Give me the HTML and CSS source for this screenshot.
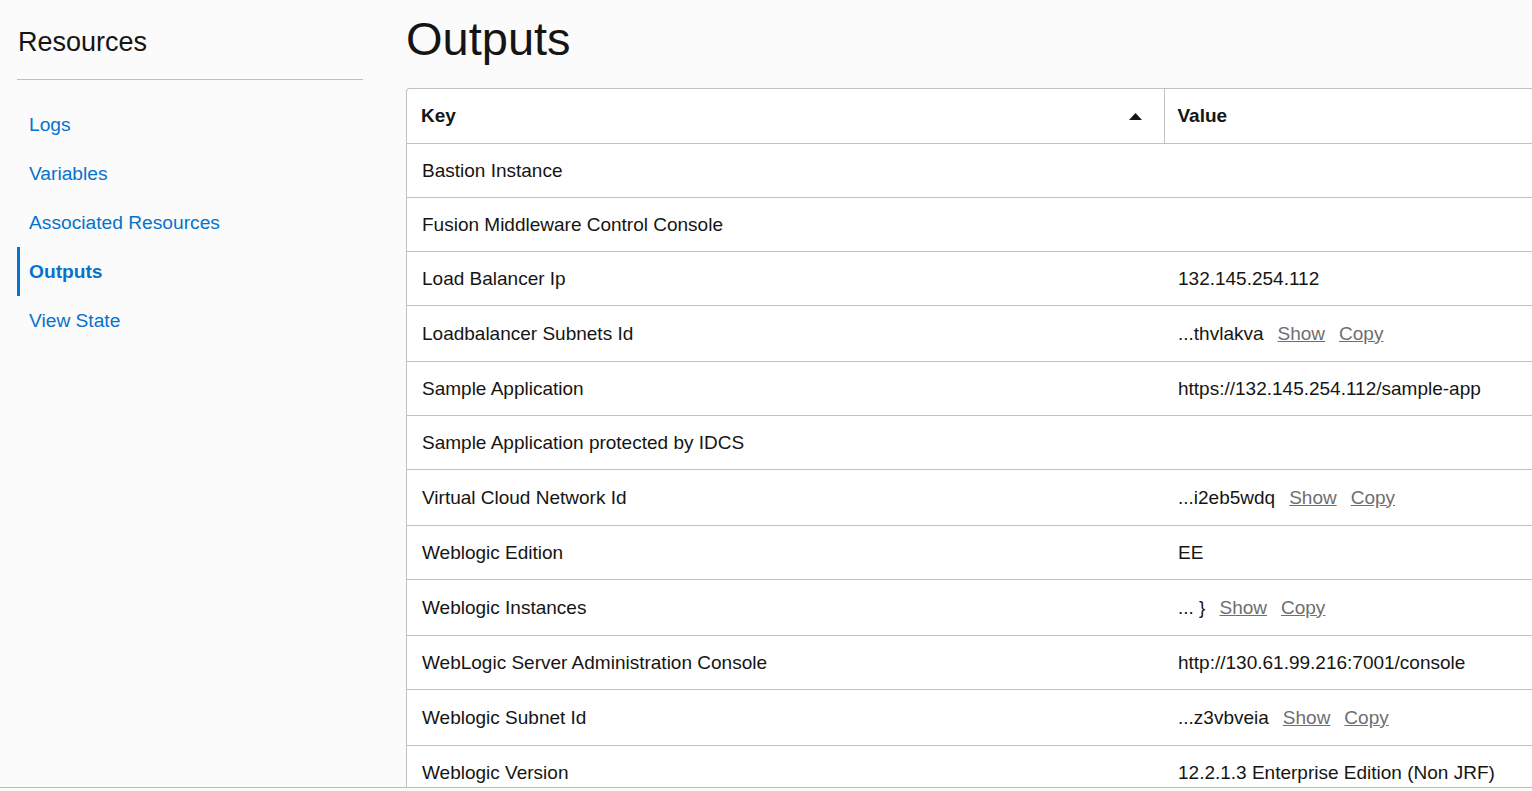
FILE: index.html
```html
<!DOCTYPE html>
<html lang="en">
<head>
<meta charset="utf-8">
<title>Outputs</title>
<link rel="stylesheet" href="styles.css">
</head>
<body>
<div class="page">
  <aside class="sidebar">
    <h2 class="side-title">Resources</h2>
    <nav class="side-nav">
      <a class="nav-item" href="#">Logs</a>
      <a class="nav-item" href="#">Variables</a>
      <a class="nav-item" href="#">Associated Resources</a>
      <a class="nav-item active" href="#">Outputs</a>
      <a class="nav-item" href="#">View State</a>
    </nav>
  </aside>
  <main class="main">
    <h1 class="title">Outputs</h1>
    <div class="table-box">
      <table class="grid">
        <thead>
          <tr>
            <th class="col-key"><div class="th-inner"><span>Key</span><svg class="sort" width="13" height="7" viewBox="0 0 13 7"><polygon points="0,7 6.5,0 13,7" fill="#161513"/></svg></div></th>
            <th class="col-val">Value</th>
          </tr>
        </thead>
        <tbody>
          <tr><td class="k">Bastion Instance</td><td class="v"></td></tr>
          <tr><td class="k">Fusion Middleware Control Console</td><td class="v"></td></tr>
          <tr><td class="k">Load Balancer Ip</td><td class="v">132.145.254.112</td></tr>
          <tr class="tall"><td class="k">Loadbalancer Subnets Id</td><td class="v">...thvlakva<a class="act" href="#">Show</a><a class="act" href="#">Copy</a></td></tr>
          <tr><td class="k">Sample Application</td><td class="v">https://132.145.254.112/sample-app</td></tr>
          <tr><td class="k">Sample Application protected by IDCS</td><td class="v"></td></tr>
          <tr class="tall"><td class="k">Virtual Cloud Network Id</td><td class="v">...i2eb5wdq<a class="act" href="#">Show</a><a class="act" href="#">Copy</a></td></tr>
          <tr><td class="k">Weblogic Edition</td><td class="v">EE</td></tr>
          <tr class="tall"><td class="k">Weblogic Instances</td><td class="v">... }<a class="act" href="#">Show</a><a class="act" href="#">Copy</a></td></tr>
          <tr><td class="k">WebLogic Server Administration Console</td><td class="v">http://130.61.99.216:7001/console</td></tr>
          <tr class="tall"><td class="k">Weblogic Subnet Id</td><td class="v">...z3vbveia<a class="act" href="#">Show</a><a class="act" href="#">Copy</a></td></tr>
          <tr><td class="k">Weblogic Version</td><td class="v">12.2.1.3 Enterprise Edition (Non JRF)</td></tr>
        </tbody>
      </table>
    </div>
  </main>
</div>
</body>
</html>
```

FILE: styles.css
```css
html, body {
  margin: 0;
  padding: 0;
  background: #fbfbfb;
  font-family: "Liberation Sans", Arial, sans-serif;
  color: #161513;
}

.page {
  display: flex;
  height: 787px;
  overflow: hidden;
  border-bottom: 1px solid #b9bcc4;
}

.sidebar {
  flex: none;
  width: 346px;
  margin-left: 17px;
}

.side-title {
  margin: 26px 0 0 1px;
  font-size: 27px;
  line-height: 32px;
  font-weight: normal;
  color: #161513;
}

.side-nav {
  margin-top: 21px;
  border-top: 1px solid #bcc0c7;
  padding-top: 20px;
  display: flex;
  flex-direction: column;
}

.nav-item {
  display: block;
  height: 49px;
  line-height: 49px;
  padding-left: 9px;
  border-left: 3px solid transparent;
  font-size: 19.2px;
  color: #0572ce;
  text-decoration: none;
}

.nav-item.active {
  border-left-color: #0572ce;
  font-weight: bold;
}

.main {
  flex: none;
  margin-left: 43px;
  width: 1200px;
}

.title {
  margin: 11px 0 0 0;
  font-size: 47px;
  line-height: 56px;
  font-weight: normal;
  color: #161513;
}

.table-box {
  margin-top: 21px;
  background: #fff;
  border: 1px solid #bcc0c7;
  border-right: none;
  border-radius: 4px 0 0 0;
}

.grid {
  width: 100%;
  border-collapse: collapse;
  font-size: 19px;
}

.grid th {
  height: 54px;
  padding: 0;
  text-align: left;
  font-weight: bold;
  border-bottom: 1px solid #bcc0c7;
}

.grid th.col-key {
  width: 757px;
  padding-left: 14px;
  padding-right: 22px;
  box-sizing: border-box;
}

.th-inner {
  display: flex;
  align-items: center;
  justify-content: space-between;
}

.sort {
  display: block;
}

.grid th.col-val {
  border-left: 1px solid #bcc0c7;
  padding-left: 13px;
}

.grid td {
  height: 53px;
  padding: 0;
  border-bottom: 1px solid #bcc0c7;
  white-space: nowrap;
}

.grid tr.tall td {
  height: 55px;
}

.grid td.k {
  padding-left: 15px;
}

.grid td.v {
  padding-left: 14px;
}

.act {
  margin-left: 14px;
  color: #6f6f6f;
  text-decoration: underline;
}
```
